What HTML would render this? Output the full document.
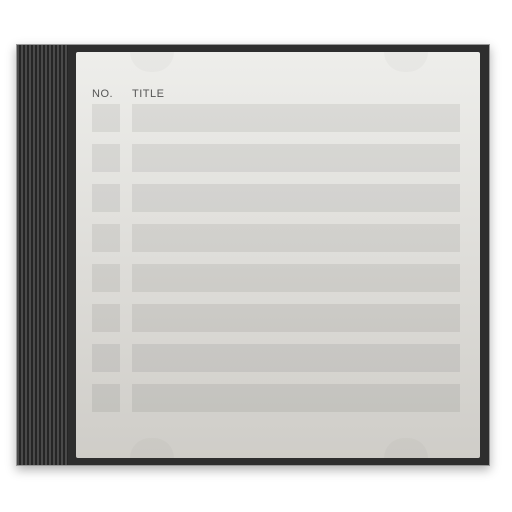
<!DOCTYPE html>
<html><head><style>
html,body{margin:0;width:512px;height:512px;background:#fff;overflow:hidden}
.case{position:absolute;left:16px;top:44px;width:474px;height:422px;background:#2e2e2e;box-shadow:0 4px 10px rgba(0,0,0,.3);border:1px solid #999;box-sizing:border-box}
.spine{position:absolute;left:17px;top:45px;width:51px;height:420px;background:repeating-linear-gradient(90deg,#4a4a4a 0 2px,#262626 2px 4px)}
.paper{position:absolute;left:76px;top:52px;width:404px;height:406px;background:linear-gradient(#eeeeeb,#cfcdc8);border-radius:2px}
.hdr{position:absolute;top:88px;font:11px "Liberation Sans",sans-serif;color:#555;letter-spacing:.5px}
.n,.t{position:absolute;height:28px;background:rgba(0,0,0,.065)}
.n{left:92px;width:28px}.t{left:132px;width:328px}
.notch{position:absolute;width:44px;height:20px;border-radius:0 0 22px 22px;background:rgba(0,0,0,.025)}
</style></head><body>
<div class="case"></div><div class="spine"></div>
<div class="paper"></div>
<div class="notch" style="left:130px;top:52px"></div>
<div class="notch" style="left:384px;top:52px"></div>
<div class="notch" style="left:130px;top:438px;border-radius:22px 22px 0 0"></div>
<div class="notch" style="left:384px;top:438px;border-radius:22px 22px 0 0"></div>
<div class="hdr" style="left:92px">NO.</div>
<div class="hdr" style="left:132px">TITLE</div>
<div class="n" style="top:104px"></div><div class="t" style="top:104px"></div>
<div class="n" style="top:144px"></div><div class="t" style="top:144px"></div>
<div class="n" style="top:184px"></div><div class="t" style="top:184px"></div>
<div class="n" style="top:224px"></div><div class="t" style="top:224px"></div>
<div class="n" style="top:264px"></div><div class="t" style="top:264px"></div>
<div class="n" style="top:304px"></div><div class="t" style="top:304px"></div>
<div class="n" style="top:344px"></div><div class="t" style="top:344px"></div>
<div class="n" style="top:384px"></div><div class="t" style="top:384px"></div>
</body></html>
